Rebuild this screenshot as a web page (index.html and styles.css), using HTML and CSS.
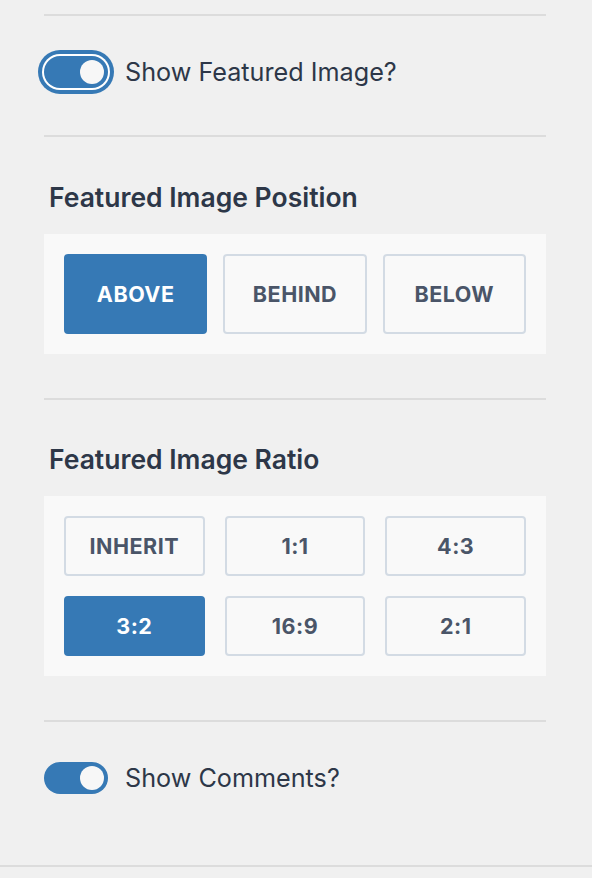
FILE: index.html
```html
<!DOCTYPE html>
<html lang="en">
<head>
    <meta charset="UTF-8">
    <meta name="viewport" content="width=device-width, initial-scale=1.0">
    <title>Featured image settings</title>
    <link rel="stylesheet" href="styles.css">
</head>
<body>
    <div class="settings">
        <div class="section section-toggle">
            <label class="toggle-row">
                <span class="toggle is-on is-focused"><span class="knob"></span></span>
                Show Featured Image?
            </label>
        </div>

        <div class="section section-choice">
            <h2 class="heading">Featured Image Position</h2>
            <div class="choices choices-position">
                <div class="choice is-active">ABOVE</div>
                <div class="choice">BEHIND</div>
                <div class="choice">BELOW</div>
            </div>
        </div>

        <div class="section section-choice section-ratio">
            <h2 class="heading">Featured Image Ratio</h2>
            <div class="choices choices-ratio">
                <div class="choice">INHERIT</div>
                <div class="choice">1:1</div>
                <div class="choice">4:3</div>
                <div class="choice is-active">3:2</div>
                <div class="choice">16:9</div>
                <div class="choice">2:1</div>
            </div>
        </div>

        <div class="section section-toggle section-last">
            <label class="toggle-row">
                <span class="toggle is-on"><span class="knob"></span></span>
                Show Comments?
            </label>
        </div>
    </div>
    <div class="footer-line"></div>
</body>
</html>
```

FILE: styles.css
```css
body{
    margin: 0;
    background-color: #f0f0f0;
    font-family: Inter, "Noto Sans", sans-serif;
    color: #2d3748;
}
.settings{
    margin: 0 46px 0 44px;
    padding-top: 14px;
}
.section{
    border-top: solid 2px #dcdcdc;
}
.section-toggle{
    padding: 40px 0 47px;
}
.section-last{
    padding-bottom: 71px;
}
.section-choice{
    padding: 46px 0 44px;
}
.section-ratio{
    padding-top: 45px;
}
.toggle-row{
    display: flex;
    align-items: center;
    gap: 17px;
    font-size: 25.2px;
    line-height: 32px;
    color: #2d3748;
}
.toggle{
    position: relative;
    display: inline-block;
    width: 64px;
    height: 32px;
    border-radius: 16px;
    background-color: #3679b5;
    flex: none;
}
.toggle.is-focused{
    box-shadow: 0 0 0 2px #ffffff, 0 0 0 6px #3679b5;
}
.knob{
    position: absolute;
    top: 4px;
    right: 4px;
    width: 24px;
    height: 24px;
    border-radius: 50%;
    background-color: #f7f7f7;
}
.heading{
    margin: 0 0 23px 5px;
    font-size: 26.5px;
    line-height: 28px;
    font-weight: 600;
    color: #2d3748;
}
.choices{
    display: grid;
    grid-template-columns: repeat(3, 1fr);
    padding: 20px;
    background-color: #f9f9f9;
}
.choices-position{
    column-gap: 16px;
}
.choices-position .choice{
    height: 80px;
}
.choices-ratio{
    gap: 20px;
}
.choices-ratio .choice{
    height: 60px;
}
.choice{
    display: flex;
    align-items: center;
    justify-content: center;
    box-sizing: border-box;
    border: solid 2px #d3dbe4;
    border-radius: 4px;
    background-color: #f9f9f9;
    font-size: 21.5px;
    font-weight: 700;
    letter-spacing: 0.5px;
    color: #4a5568;
}
.choice.is-active{
    border-color: #3679b5;
    background-color: #3679b5;
    color: #ffffff;
}
.footer-line{
    height: 2px;
    background-color: #dcdcdc;
}
```
